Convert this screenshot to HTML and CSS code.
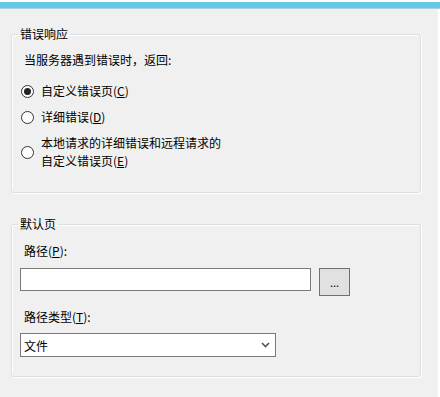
FILE: index.html
```html
<!DOCTYPE html>
<html lang="zh-CN">
<head>
    <meta charset="UTF-8">
    <title>错误页</title>
    <link rel="stylesheet" href="styles.css">
</head>
<body>
    <div class="title-bar"></div>
    <div class="page">
        <fieldset class="group group-errors">
            <legend>错误响应</legend>
            <p class="intro">当服务器遇到错误时，返回:</p>
            <label class="radio-row">
                <span class="radio checked"></span>
                <span>自定义错误页(<u>C</u>)</span>
            </label>
            <label class="radio-row">
                <span class="radio"></span>
                <span>详细错误(<u>D</u>)</span>
            </label>
            <label class="radio-row">
                <span class="radio"></span>
                <span>本地请求的详细错误和远程请求的<br>自定义错误页(<u>E</u>)</span>
            </label>
        </fieldset>

        <fieldset class="group group-default">
            <legend>默认页</legend>
            <div class="field-label">路径(<u>P</u>):</div>
            <div class="path-row">
                <div class="text-input"></div>
                <div class="browse-btn">...</div>
            </div>
            <div class="field-label">路径类型(<u>T</u>):</div>
            <div class="select-box">
                <span>文件</span>
                <svg class="chevron" width="9" height="6" viewBox="0 0 9 6">
                    <path d="M1 1 L4.5 4.5 L8 1" fill="none" stroke="#555" stroke-width="1.6"/>
                </svg>
            </div>
        </fieldset>
    </div>
</body>
</html>
```

FILE: styles.css
```css
* {
    margin: 0;
    padding: 0;
    box-sizing: border-box;
}

body {
    background: #fff;
    font-family: "Microsoft YaHei", "Noto Sans CJK SC", sans-serif;
    font-size: 12px;
    color: #000;
}

.title-bar {
    margin-top: 2px;
    height: 7px;
    background: #64c8e8;
    border-bottom: 1px solid #a9cfe0;
}

.page {
    width: 438px;
    height: 388px;
    padding-top: 17px;
    background: #f0f0f0;
}

.group {
    margin-left: 11px;
    width: 410px;
    border: 1px solid #d9dfe3;
    border-radius: 3px;
    box-shadow: inset 1px 1px 0 #fff, 1px 1px 0 #fff;
    padding: 0 0 0 8px;
}

.group legend {
    margin-left: -2px;
    padding: 0 2px;
    line-height: 16px;
    font-size: 12px;
}

.group-errors {
    height: 167px;
}

.intro {
    margin-top: 10px;
    margin-left: 4px;
    line-height: 16px;
}

.radio-row {
    display: flex;
    align-items: center;
    gap: 7px;
    line-height: 18px;
    margin-top: 8px;
    padding-left: 1px;
}

.intro + .radio-row {
    margin-top: 14px;
}

.radio {
    width: 13px;
    height: 13px;
    border: 1px solid #333;
    border-radius: 50%;
    background: #fff;
    display: flex;
    align-items: center;
    justify-content: center;
    flex-shrink: 0;
}

.radio.checked::after {
    content: "";
    width: 7px;
    height: 7px;
    border-radius: 50%;
    background: #222;
}

.group-default {
    margin-top: 23px;
    height: 161px;
}

.field-label {
    margin-left: 4px;
    line-height: 16px;
    margin-top: 11px;
}

.path-row {
    display: flex;
    align-items: flex-start;
    gap: 8px;
    margin-top: 9px;
}

.text-input {
    width: 291px;
    height: 23px;
    background: #fff;
    border: 1px solid #7a7a7a;
}

.browse-btn {
    width: 31px;
    height: 28px;
    background: #e1e1e1;
    border: 1px solid #707070;
    display: flex;
    align-items: center;
    justify-content: center;
    font-size: 11px;
    line-height: 1;
}

.path-row + .field-label {
    margin-top: 13px;
}

.select-box {
    margin-top: 8px;
    width: 256px;
    height: 24px;
    background: #fff;
    border: 1px solid #7a7a7a;
    display: flex;
    align-items: center;
    justify-content: space-between;
    padding: 0 5px 0 3px;
}
```
